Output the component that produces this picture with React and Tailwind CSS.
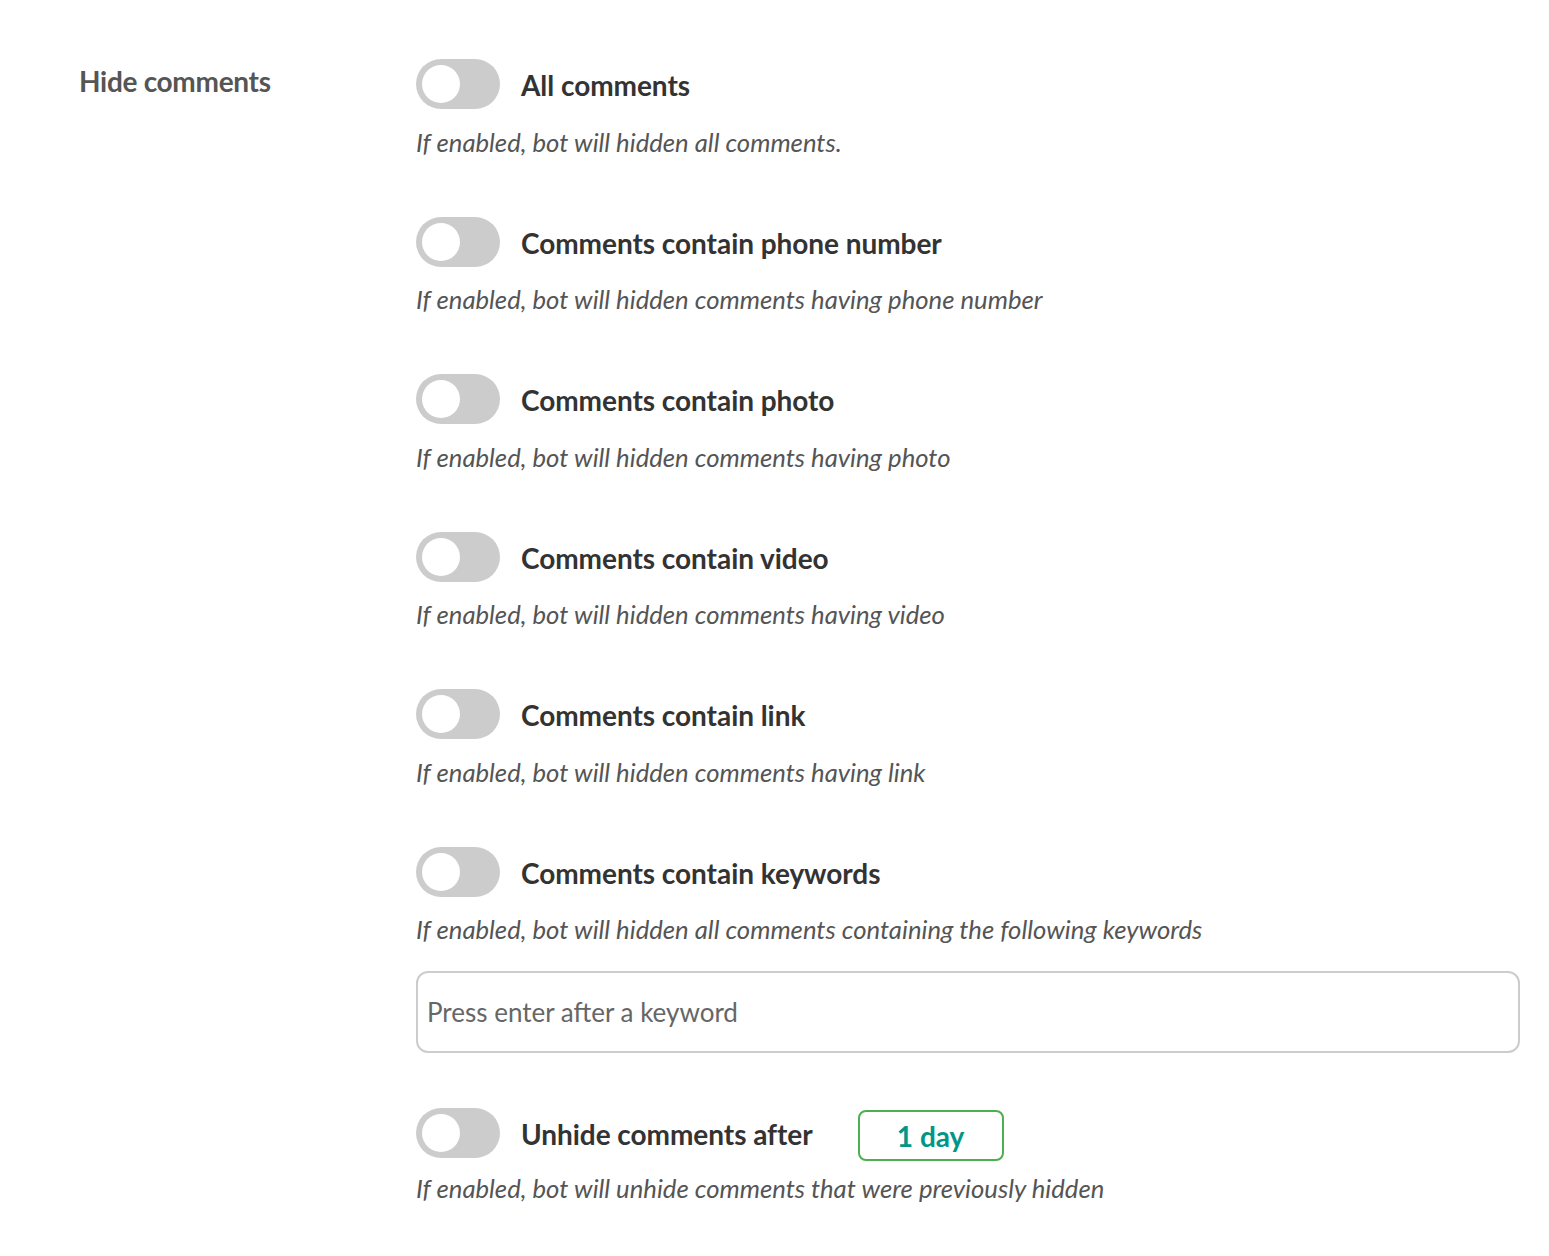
import { useState } from 'react';

const OPTIONS = [
  { title: 'All comments', desc: 'If enabled, bot will hidden all comments.' },
  { title: 'Comments contain phone number', desc: 'If enabled, bot will hidden comments having phone number' },
  { title: 'Comments contain photo', desc: 'If enabled, bot will hidden comments having photo' },
  { title: 'Comments contain video', desc: 'If enabled, bot will hidden comments having video' },
  { title: 'Comments contain link', desc: 'If enabled, bot will hidden comments having link' },
  { title: 'Comments contain keywords', desc: 'If enabled, bot will hidden all comments containing the following keywords', keywords: true },
];

const Toggle = ({ on, onClick }) => (
  <button
    type="button"
    onClick={onClick}
    className={`relative w-[84px] h-[50px] rounded-full shrink-0 transition-colors ${on ? 'bg-[#4caf50]' : 'bg-[#cccccc]'}`}
  >
    <span
      className={`absolute top-[6px] w-[38px] h-[38px] rounded-full bg-white transition-all ${on ? 'left-[40px]' : 'left-[6px]'}`}
    />
  </button>
);

const Option = ({ title, desc, on, onToggle, className = '', descClass = 'mt-[15.5px]', children }) => (
  <div className={className}>
    <div className="flex items-center gap-[21px] h-[50px]">
      <Toggle on={on} onClick={onToggle} />
      <span className="text-[28px] font-bold text-[#333] tracking-[-0.05px] pt-[2px]">{title}</span>
      {children}
    </div>
    <p className={`${descClass} text-[25.7px] italic text-[#555] leading-[34px]`}>{desc}</p>
  </div>
);

export default function App() {
  const [state, setState] = useState({});
  const flip = (k) => setState((s) => ({ ...s, [k]: !s[k] }));

  return (
    <div className="bg-white min-h-[1256px] pl-[79px] pr-[29px] pt-[59px] font-['Lato',sans-serif]">
      <div className="grid grid-cols-[337px_1fr]">
        <div className="pt-[1px] text-[28px] font-bold text-[#555] tracking-[-0.3px]">Hide comments</div>
        <div className="flex flex-col">
          {OPTIONS.map((o, i) => (
            <div key={i} className={i === 0 ? '' : 'mt-[58px]'}>
              <Option title={o.title} desc={o.desc} on={state[i]} onToggle={() => flip(i)} />
              {o.keywords && (
                <input
                  placeholder="Press enter after a keyword"
                  className="mt-[25px] w-full h-[82px] rounded-[12px] border-2 border-[#cccccc] px-[9px] text-[26px] text-[#333] placeholder:text-[#666] outline-none"
                />
              )}
            </div>
          ))}
          <Option
            className="mt-[54.5px]"
            descClass="mt-[13px]"
            title="Unhide comments after"
            desc="If enabled, bot will unhide comments that were previously hidden"
            on={state.unhide}
            onToggle={() => flip('unhide')}
          >
            <span className="ml-[24px] mt-[6px] w-[146px] h-[51px] flex items-center justify-center rounded-[8px] border-2 border-[#4caf50] text-[28px] font-bold text-[#009688]">
              1 day
            </span>
          </Option>
        </div>
      </div>
    </div>
  );
}
